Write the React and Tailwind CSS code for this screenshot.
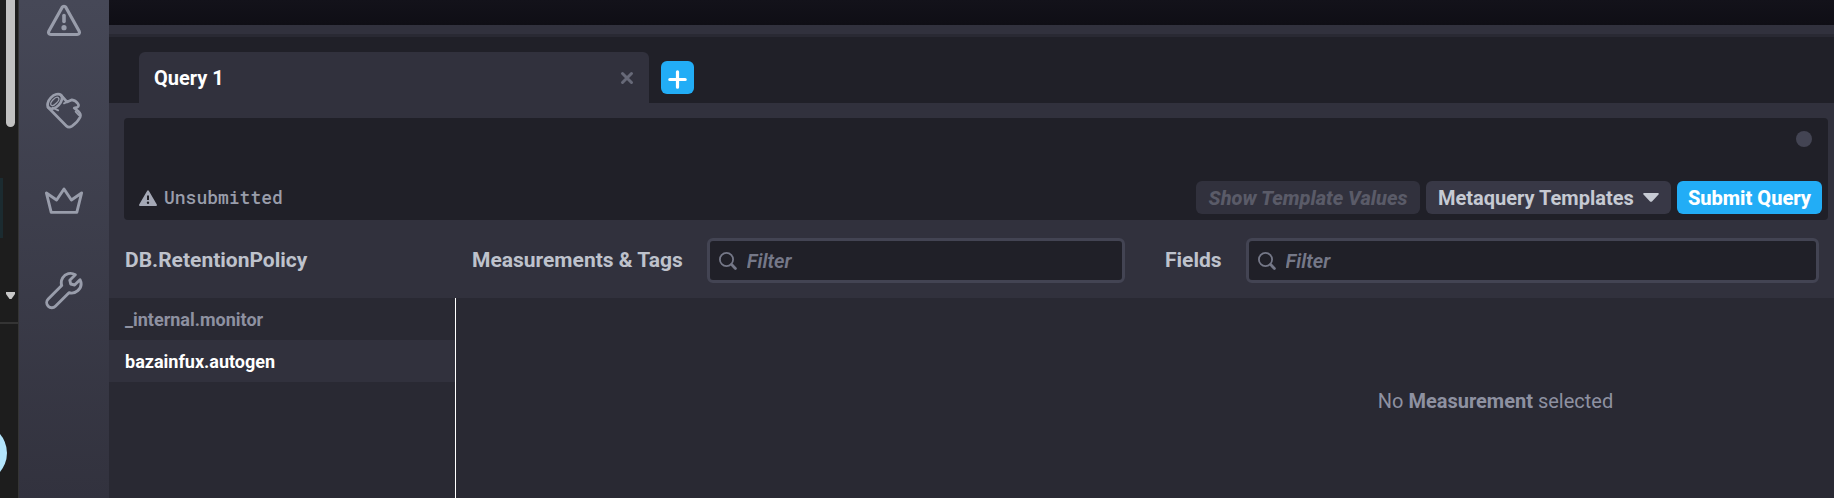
import React from 'react';

const databases = [
  { name: '_internal.monitor', active: false },
  { name: 'bazainfux.autogen', active: true },
];

function AlertOutline() {
  return (
    <svg width="40" height="40" viewBox="0 0 40 40" fill="none" stroke="currentColor" strokeWidth="3.2" strokeLinejoin="round" strokeLinecap="round">
      <path d="M18.2 6.2 L4.8 30.2 C4 31.8 5 33.5 6.8 33.5 H33.2 C35 33.5 36 31.8 35.2 30.2 L21.8 6.2 C21 4.9 19 4.9 18.2 6.2 Z"/>
      <path d="M20 14.5 V20.5" strokeWidth="3.6"/>
      <circle cx="20" cy="26.7" r="2.6" fill="currentColor" stroke="none"/>
    </svg>
  );
}

function Log() {
  return (
    <svg width="40" height="40" viewBox="0 0 40 40" fill="none" stroke="currentColor" strokeWidth="2.7" strokeLinejoin="round" strokeLinecap="round">
      <ellipse cx="10.8" cy="10.4" rx="8.8" ry="5.4" transform="rotate(-46 10.8 10.4)"/>
      <ellipse cx="10.8" cy="10.4" rx="5.2" ry="2.4" transform="rotate(-46 10.8 10.4)" strokeWidth="1.3"/>
      <path d="M4 16.2 L22.4 35 C24 36.6 26.2 36.4 28 35.2 C31.6 32.6 34.6 29.4 36.2 26 C37 23.8 36 21.8 34.2 20.2 L30.2 17 L33.4 16.2 C34.8 15.4 34.8 13.8 34 12.8 C32.4 10.4 30.4 9 28 8.8 L23 11 L17 4.2"/>
      <path d="M20 12.4 L23 11 M31.6 20.6 L34.6 24 M8.6 16.6 L14.2 19.4" strokeWidth="1.8"/>
    </svg>
  );
}

function Crown() {
  return (
    <svg width="40" height="40" viewBox="0 0 40 40" fill="none" stroke="currentColor" strokeWidth="2.9" strokeLinejoin="round">
      <path d="M2.4 12 L7.2 31.4 H32.8 L37.6 12 L27.4 19 L20 8 L12.6 19 Z"/>
    </svg>
  );
}

function Wrench() {
  return (
    <svg width="40" height="40" viewBox="0 0 40 40" fill="none" stroke="currentColor" strokeWidth="2.9" strokeLinejoin="round" strokeLinecap="round">
      <path d="M31.3 3.7 C26.8 1 21.2 2.6 18.7 6.7 C17.2 9.2 16.9 11.8 17.7 14.5 L4.2 28 C2.2 30 2.2 33.2 4.2 35.2 C6.2 37.2 9.4 37.2 11.4 35.2 L25 21.7 C28 22.6 31.4 21.8 33.8 19.7 C37 16.8 37.8 12.4 36 8.7 L30.6 14 L26.7 13 L25.8 9.2 Z"/>
    </svg>
  );
}

function AlertSolid() {
  return (
    <svg width="18" height="16" viewBox="0 0 18 16">
      <path d="M8.2 0.7 C8.6 0 9.4 0 9.8 0.7 L17.8 14.6 C18.2 15.3 17.8 16 17 16 H1 C0.2 16 -0.2 15.3 0.2 14.6 Z" fill="#a4a8b6"/>
      <path d="M9 5.5 V10" stroke="#202028" strokeWidth="2"/>
      <circle cx="9" cy="12.7" r="1.2" fill="#202028"/>
    </svg>
  );
}

function SearchIcon() {
  return (
    <svg className="shrink-0" width="18" height="18" viewBox="0 0 18 18" fill="none" stroke="#757888" strokeLinecap="round">
      <circle cx="7.5" cy="7.5" r="6.6" strokeWidth="1.8"/>
      <path d="M12.6 12.6 L16.4 16.4" strokeWidth="2.8"/>
    </svg>
  );
}

function Filter({ label }) {
  return (
    <label className="flex h-[45px] min-w-0 flex-1 items-center gap-[10px] rounded-md border-3 border-[#434453] bg-[#202028] px-[9px]">
      <SearchIcon/>
      <input
        type="text"
        aria-label={label}
        placeholder="Filter"
        className="min-w-0 flex-1 bg-transparent text-[20px] font-semibold italic text-[#bec2cc] outline-none placeholder:text-[#757888]"
      />
    </label>
  );
}

function BrowserEdge() {
  return (
    <div className="flex w-[19px] shrink-0 flex-col items-start overflow-hidden border-r border-[#343434] bg-[#1d1d1d]">
      <div className="ml-[6px] h-[127px] w-[9px] rounded-b-full bg-[#c1c1c1]"/>
      <div className="mt-[51px] h-[60px] w-[3px] bg-[#1b2b30]"/>
      <svg className="ml-[6px] mt-[54px]" width="9" height="7" viewBox="0 0 9 7" fill="#c8c8c8">
        <path d="M0 0 H9 V2 L5.5 7 H3.5 L0 2 Z"/>
      </svg>
      <div className="mt-[23px] h-[2px] w-full bg-[#343434]"/>
      <div className="-ml-[51px] mt-[100px] h-[58px] w-[58px] rounded-full bg-[#b3e5fc]"/>
    </div>
  );
}

function Sidebar() {
  const items = [
    { label: 'Alerting', icon: <AlertOutline/> },
    { label: 'Log Viewer', icon: <Log/> },
    { label: 'Admin', icon: <Crown/> },
    { label: 'Configuration', icon: <Wrench/> },
  ];
  return (
    <div className="w-[90px] shrink-0 overflow-hidden bg-linear-to-b from-[#464857] to-[#32323e]">
      <nav className="-mt-6 flex flex-col">
        {items.map(item => (
          <a key={item.label} href="#" aria-label={item.label} className="flex h-[90px] items-center justify-center text-[#999dab]">
            {item.icon}
          </a>
        ))}
      </nav>
    </div>
  );
}

function QueryTabs() {
  return (
    <div className="flex h-[66px] items-end bg-[#202028] pl-[30px]">
      <div className="flex h-[51px] w-[510px] items-center justify-between rounded-t-md bg-[#31313d] px-[15px]">
        <span className="text-[20px] font-bold text-white">Query 1</span>
        <button aria-label="Close tab" className="text-[#676978]">
          <svg width="14" height="14" viewBox="0 0 14 14" stroke="currentColor" strokeWidth="3" strokeLinecap="round">
            <path d="M2.5 2.5 L11.5 11.5 M11.5 2.5 L2.5 11.5"/>
          </svg>
        </button>
      </div>
      <button aria-label="Add query" className="mb-[9px] ml-3 flex h-[33px] w-[33px] items-center justify-center rounded-md bg-[#22adf6] pt-[3px] text-white">
        <svg width="19" height="19" viewBox="0 0 19 19" stroke="currentColor" strokeWidth="3.2" strokeLinecap="round">
          <path d="M9.5 1.8 V17.2 M1.8 9.5 H17.2"/>
        </svg>
      </button>
    </div>
  );
}

function QueryEditor() {
  return (
    <div className="ml-[15px] mr-[6px] mt-[15px] flex h-[102px] flex-col justify-between rounded-sm bg-[#202028] pb-[6px] pl-[15px] pr-[6px] pt-[13px]">
      <div className="mr-[10px] h-4 w-4 self-end rounded-full bg-[#434453]"/>
      <div className="flex h-[33px] items-center gap-[6px]">
        <AlertSolid/>
        <span className="flex-1 pl-px font-['Roboto_Mono','DejaVu_Sans_Mono',monospace] text-[18px] font-medium text-[#999dab]">Unsubmitted</span>
        <button disabled className="h-[33px] w-[224px] rounded-md bg-[#31313d] text-[20px] font-extrabold italic text-[#5a5b68]">
          Show Template Values
        </button>
        <div className="relative w-[245px]">
          <select aria-label="Metaquery Templates" className="h-[33px] w-full appearance-none rounded-md bg-[#383846] pl-3 text-[20px] font-bold text-[#c6cad3]">
            <option>Metaquery Templates</option>
          </select>
          <svg className="pointer-events-none absolute right-3 top-3" width="16" height="9" viewBox="0 0 16 9" fill="#c6cad3">
            <path d="M1.2 0 H14.8 C15.8 0 16.2 0.9 15.5 1.6 L9 8.4 C8.4 9 7.6 9 7 8.4 L0.5 1.6 C-0.2 0.9 0.2 0 1.2 0 Z"/>
          </svg>
        </div>
        <button className="h-[33px] w-[145px] rounded-md bg-[#22adf6] text-[20px] font-extrabold text-white">Submit Query</button>
      </div>
    </div>
  );
}

function SchemaExplorer() {
  return (
    <div className="grid flex-1 grid-cols-[346fr_694fr_685fr] grid-rows-[78px_1fr]">
      <div className="flex items-center pl-4 pt-[3px]">
        <h2 className="text-[21px] font-bold text-[#bec2cc]">DB.RetentionPolicy</h2>
      </div>
      <div className="flex items-center gap-6 pl-[17px] pr-6 pt-[3px]">
        <h2 className="text-[21px] font-bold text-[#bec2cc]">Measurements &amp; Tags</h2>
        <Filter label="Filter measurements"/>
      </div>
      <div className="flex items-center gap-6 pl-4 pr-[15px] pt-[3px]">
        <h2 className="text-[21px] font-bold text-[#bec2cc]">Fields</h2>
        <Filter label="Filter fields"/>
      </div>

      <ul className="bg-[#292933] text-[18px] font-bold">
        {databases.map(db => (
          <li key={db.name} className={db.active ? 'bg-[#31313d] text-white' : 'text-[#8e91a1]'}>
            <button className="h-[42px] w-full pl-4 text-left">{db.name}</button>
          </li>
        ))}
      </ul>
      <div className="border-l border-white bg-[#292933]"/>
      <div className="flex items-center justify-center bg-[#292933] pl-2 pt-[6px]">
        <p className="text-[20px] text-[#8e91a1]">No <strong>Measurement</strong> selected</p>
      </div>
    </div>
  );
}

export default function App() {
  return (
    <div className="flex min-h-screen bg-[#31313d] font-['Roboto',sans-serif]">
      <BrowserEdge/>
      <Sidebar/>
      <main className="flex min-w-0 flex-1 flex-col">
        <div className="h-[25px] bg-linear-to-b from-[#13121a] to-[#0f0e15]"/>
        <div className="h-3 border-b-3 border-[#292933]"/>
        <QueryTabs/>
        <QueryEditor/>
        <SchemaExplorer/>
      </main>
    </div>
  );
}
